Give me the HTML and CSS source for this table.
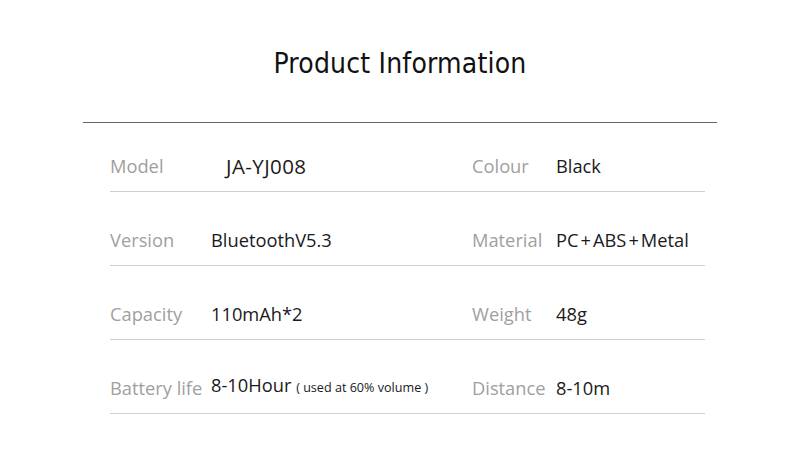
FILE: index.html
```html
<!DOCTYPE html>
<html>
<head>
<meta charset="utf-8">
<link rel="stylesheet" href="styles.css">
</head>
<body>
<div class="page">
  <h1 class="title">Product Information</h1>
  <div class="rule"></div>
  <div class="table">
    <div class="row first">
      <span class="label">Model</span><span class="value model">JA-YJ008</span>
      <span class="label">Colour</span><span class="value">Black</span>
    </div>
    <div class="row">
      <span class="label">Version</span><span class="value">BluetoothV5.3</span>
      <span class="label">Material</span><span class="value">PC<span class="plus">+</span>ABS<span class="plus">+</span>Metal</span>
    </div>
    <div class="row">
      <span class="label">Capacity</span><span class="value">110mAh*2</span>
      <span class="label">Weight</span><span class="value">48g</span>
    </div>
    <div class="row">
      <span class="label">Battery life</span><span class="value">8-10Hour <small class="note">( used at 60% volume )</small></span>
      <span class="label">Distance</span><span class="value">8-10m</span>
    </div>
  </div>
</div>
</body>
</html>
```

FILE: styles.css
```css
html, body {
  margin: 0;
  padding: 0;
  background: #ffffff;
}
.page {
  width: 800px;
  height: 470px;
  box-sizing: border-box;
  padding-top: 45px;
}
.title {
  margin: 0;
  text-align: center;
  font-family: "Liberation Sans Narrow", "DejaVu Sans Condensed", sans-serif;
  font-weight: normal;
  font-size: 28px;
  line-height: 38px;
  letter-spacing: 0.2px;
  color: #111;
}
.rule {
  margin: 39px 83px 0 83px;
  height: 1px;
  background: #666;
}
.table {
  margin: 0 95px 0 110px;
}
.row {
  display: grid;
  grid-template-columns: 101px 261px 84px 1fr;
  align-items: end;
  height: 73px;
  border-bottom: 1px solid #cfcfcf;
  font-family: "Open Sans", sans-serif;
  font-size: 18.3px;
  line-height: 22px;
}
.row.first {
  height: 68px;
}
.row > span {
  padding-bottom: 14px;
  white-space: nowrap;
}
.label {
  color: #a0a0a0;
}
.value {
  color: #1a1a1a;
}
.value.model {
  padding-left: 15px;
  font-size: 20.5px;
  letter-spacing: 0.4px;
}
.plus {
  margin: 0 2px;
}
.note {
  font-size: 12.6px;
}
```
